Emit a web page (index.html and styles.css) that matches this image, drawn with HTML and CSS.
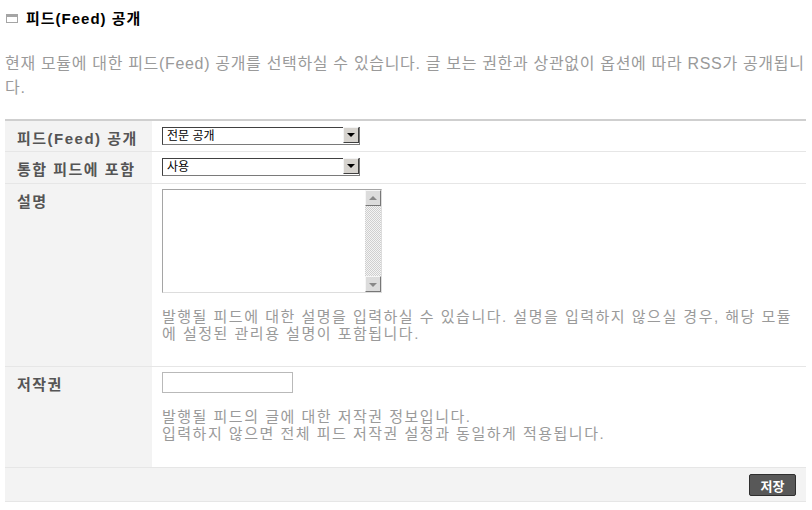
FILE: index.html
```html
<!DOCTYPE html>
<html lang="ko">
<head>
    <meta charset="UTF-8"/>
    <title>피드(Feed) 공개</title>
    <link rel="stylesheet" href="styles.css">
</head>
<body>
<div class="wrap">
    <h3 class="title"><span class="ico"></span>피드(Feed) 공개</h3>
    <p class="summary">현재 모듈에 대한 피드(Feed) 공개를 선택하실 수 있습니다. 글 보는 권한과 상관없이 옵션에 따라 RSS가 공개됩니다.</p>

    <table class="form">
        <tr>
            <th>피드(Feed) 공개</th>
            <td>
                <div class="sel">
                    <select><option>전문 공개</option></select>
                    <span class="arrow"></span>
                </div>
            </td>
        </tr>
        <tr>
            <th>통합 피드에 포함</th>
            <td>
                <div class="sel">
                    <select><option>사용</option></select>
                    <span class="arrow"></span>
                </div>
            </td>
        </tr>
        <tr class="tall">
            <th>설명</th>
            <td>
                <!-- 옛날 윈도우 스크롤바 모양 -->
                <div class="textbox">
                    <textarea></textarea>
                    <div class="scroll">
                        <span class="btn up"></span>
                        <span class="track"></span>
                        <span class="btn down"></span>
                    </div>
                </div>
                <p class="help">발행될 피드에 대한 설명을 입력하실 수 있습니다. 설명을 입력하지 않으실 경우, 해당 모듈에 설정된 관리용 설명이 포함됩니다.</p>
            </td>
        </tr>
        <tr class="tall">
            <th>저작권</th>
            <td>
                <input type="text" class="copy"/>
                <p class="help">발행될 피드의 글에 대한 저작권 정보입니다.<br/>입력하지 않으면 전체 피드 저작권 설정과 동일하게 적용됩니다.</p>
            </td>
        </tr>
    </table>
    <div class="foot">
        <button class="save">저장</button>
    </div>
</div>
</body>
</html>
```

FILE: styles.css
```css
body {
    margin: 0;
    font-family: "Liberation Sans", "Noto Sans CJK KR", sans-serif;
    background: #fff;
}

.wrap {
    padding: 0 6px 0 5px;
}

.title {
    margin: 0;
    padding: 6px 0 0 0;
    height: 22px;
    font-size: 15px;
    letter-spacing: 1px;
    color: #000;
    display: flex;
    align-items: center;
}

.ico {
    display: inline-block;
    width: 10px;
    height: 5px;
    border: 1px solid #a5a5a5;
    border-top-width: 3px;
    margin: 2px 8px 0 1px;
}

.summary {
    margin: 24px 0 0;
    font-size: 16px;
    letter-spacing: 0.68px;
    line-height: 24px;
    color: #9a9a9a;
}

.form {
    width: 100%;
    margin-top: 19px;
    border-collapse: collapse;
    border-top: 2px solid #cfcfcf;
}

.form th {
    width: 135px;
    background: #f3f3f3;
    color: #555;
    font-size: 15px;
    letter-spacing: 1.5px;
    text-align: left;
    vertical-align: top;
    padding: 6px 0 0 12px;
    border-bottom: 1px solid #e6e6e6;
}

.form td {
    padding: 5px 0 6px 10px;
    border-bottom: 1px solid #e6e6e6;
    vertical-align: top;
}

.form tr:first-child th,
.form tr:first-child td {
    height: 19px;
}

.form tr:nth-child(2) th,
.form tr:nth-child(2) td {
    height: 20px;
}

.sel {
    position: relative;
    width: 198px;
    height: 18px;
}

.sel select {
    appearance: none;
    width: 198px;
    height: 18px;
    margin: 0;
    padding: 0 0 0 4px;
    border: 1px solid #7a7a7a;
    border-top-color: #404040;
    border-left-color: #404040;
    border-radius: 0;
    background: #fff;
    font-family: "Liberation Sans", "Noto Sans CJK KR", sans-serif;
    font-size: 12px;
    color: #000;
}

.arrow {
    position: absolute;
    right: 1px;
    top: 1px;
    width: 16px;
    height: 16px;
    background: #d6d3ce;
    border: 1px solid #f4f4f4;
    border-right-color: #404040;
    border-bottom-color: #404040;
    box-sizing: border-box;
}

.arrow::after {
    content: "";
    position: absolute;
    left: 3px;
    top: 5px;
    border-left: 4px solid transparent;
    border-right: 4px solid transparent;
    border-top: 4px solid #000;
}

.textbox {
    display: flex;
    width: 218px;
    height: 102px;
    border: 1px solid #a5a5a5;
    border-right-color: #ddd;
    border-bottom-color: #ddd;
}

.textbox textarea {
    flex: 1;
    border: none;
    resize: none;
    outline: none;
    margin: 0;
}

.scroll {
    width: 16px;
    display: flex;
    flex-direction: column;
}

.scroll .btn {
    position: relative;
    height: 16px;
    box-sizing: border-box;
    background: #dcdcdc;
    border: 1px solid #f6f6f6;
    border-right-color: #777;
    border-bottom-color: #777;
}

.scroll .btn::after {
    content: "";
    position: absolute;
    left: 3px;
    border-left: 4px solid transparent;
    border-right: 4px solid transparent;
}

.scroll .up::after {
    top: 5px;
    border-bottom: 4px solid #888;
}

.scroll .down::after {
    top: 6px;
    border-top: 4px solid #888;
}

.scroll .track {
    flex: 1;
    background: repeating-conic-gradient(#cfcfcf 0 25%, #f4f4f4 0 50%) 0 0 / 2px 2px;
}

.help {
    margin: 15px 0 0;
    font-size: 15px;
    letter-spacing: 1.5px;
    line-height: 17px;
    color: #9a9a9a;
    padding-right: 8px;
}

.form tr.tall:nth-child(3) td {
    height: 171px;
}

.form tr.tall:nth-child(4) td {
    height: 89px;
}

.copy {
    display: block;
    width: 131px;
    height: 21px;
    box-sizing: border-box;
    margin: 0;
    border: 1px solid #b9b9b9;
}

.foot {
    background: #f3f3f3;
    height: 33px;
    border-bottom: 1px solid #e6e6e6;
    display: flex;
    justify-content: flex-end;
    align-items: center;
    padding-right: 10px;
}

.save {
    font-family: "Liberation Sans", "Noto Sans CJK KR", sans-serif;
    font-size: 13px;
    font-weight: bold;
    color: #fff;
    background: #585858;
    border: 1px solid #2f2f2f;
    border-radius: 2px;
    width: 47px;
    height: 22px;
    padding: 0;
    margin-top: 1px;
}
```
